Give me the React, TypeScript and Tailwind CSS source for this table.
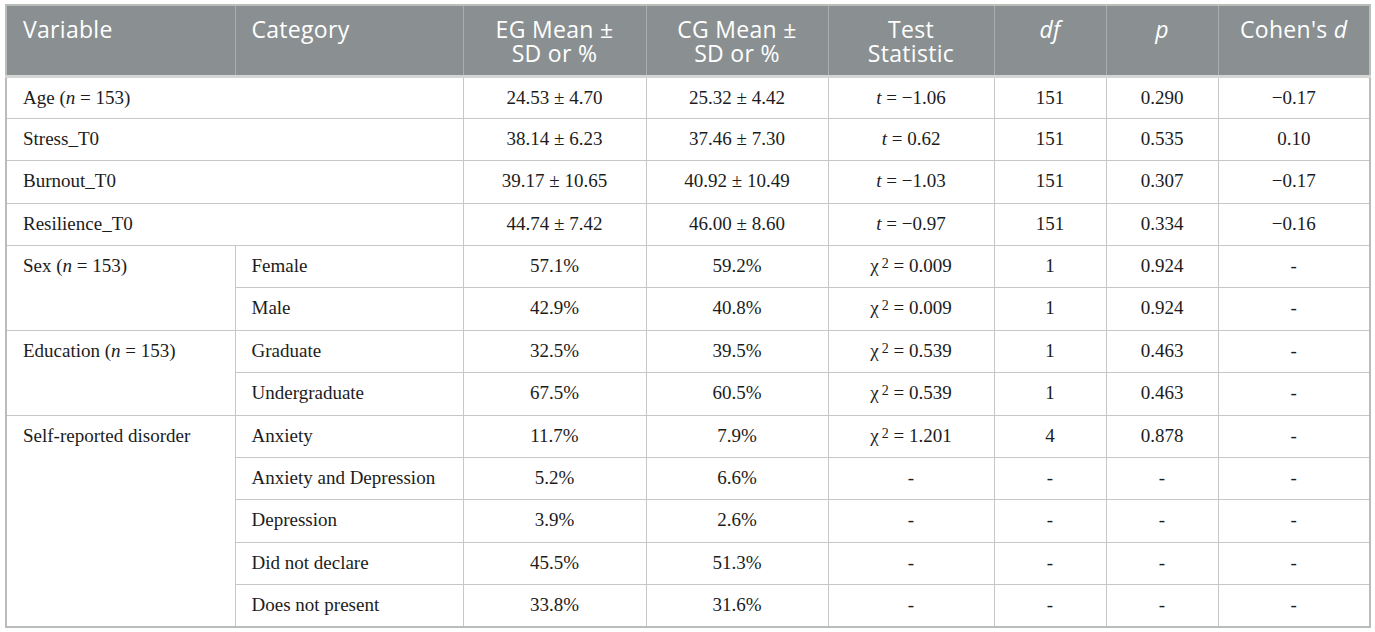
import React from "react";

const serif = { fontFamily: '"Liberation Serif", "Times New Roman", serif' };

type Row = {
  v?: React.ReactNode;
  vSpan?: number;
  vFull?: boolean;
  c?: string;
  eg: string;
  cg: string;
  t: React.ReactNode;
  df: string;
  p: string;
  d: string;
};

const N = () => (
  <>
    (<i>n</i> = 153)
  </>
);
const T = ({ v }: { v: string }) => (
  <>
    <i>t</i> = {v}
  </>
);
const X = ({ v }: { v: string }) => (
  <>
    χ<sup className="text-[14px] relative -top-[4px] ml-[3px]">2</sup> = {v}
  </>
);

const rows: Row[] = [
  { v: <>Age <N /></>, vFull: true, eg: "24.53 ± 4.70", cg: "25.32 ± 4.42", t: <T v="−1.06" />, df: "151", p: "0.290", d: "−0.17" },
  { v: "Stress_T0", vFull: true, eg: "38.14 ± 6.23", cg: "37.46 ± 7.30", t: <T v="0.62" />, df: "151", p: "0.535", d: "0.10" },
  { v: "Burnout_T0", vFull: true, eg: "39.17 ± 10.65", cg: "40.92 ± 10.49", t: <T v="−1.03" />, df: "151", p: "0.307", d: "−0.17" },
  { v: "Resilience_T0", vFull: true, eg: "44.74 ± 7.42", cg: "46.00 ± 8.60", t: <T v="−0.97" />, df: "151", p: "0.334", d: "−0.16" },
  { v: <>Sex <N /></>, vSpan: 2, c: "Female", eg: "57.1%", cg: "59.2%", t: <X v="0.009" />, df: "1", p: "0.924", d: "-" },
  { c: "Male", eg: "42.9%", cg: "40.8%", t: <X v="0.009" />, df: "1", p: "0.924", d: "-" },
  { v: <>Education <N /></>, vSpan: 2, c: "Graduate", eg: "32.5%", cg: "39.5%", t: <X v="0.539" />, df: "1", p: "0.463", d: "-" },
  { c: "Undergraduate", eg: "67.5%", cg: "60.5%", t: <X v="0.539" />, df: "1", p: "0.463", d: "-" },
  { v: "Self-reported disorder", vSpan: 5, c: "Anxiety", eg: "11.7%", cg: "7.9%", t: <X v="1.201" />, df: "4", p: "0.878", d: "-" },
  { c: "Anxiety and Depression", eg: "5.2%", cg: "6.6%", t: "-", df: "-", p: "-", d: "-" },
  { c: "Depression", eg: "3.9%", cg: "2.6%", t: "-", df: "-", p: "-", d: "-" },
  { c: "Did not declare", eg: "45.5%", cg: "51.3%", t: "-", df: "-", p: "-", d: "-" },
  { c: "Does not present", eg: "33.8%", cg: "31.6%", t: "-", df: "-", p: "-", d: "-" },
];

const td = "border border-[#c5c8c6] align-top pt-[9px] pb-0 text-[19px] leading-[22px] text-[#1c1c1c]";
const th =
  "border-x border-[#a9aeae] align-top pt-[11px] px-2 font-normal text-white text-[23px] leading-[24px] tracking-[0.3px]";

export default function App() {
  return (
    <div className="w-[1375px] h-[632px] bg-white pt-[4px] pl-[5px]">
      <table
        className="border-collapse table-fixed w-[1364px] border-2 border-[#b9bdba]"
        style={serif}
      >
        <colgroup>
          <col className="w-[229px]" />
          <col className="w-[228px]" />
          <col className="w-[183px]" />
          <col className="w-[182px]" />
          <col className="w-[166px]" />
          <col className="w-[112px]" />
          <col className="w-[112px]" />
          <col className="w-[152px]" />
        </colgroup>
        <thead>
          <tr
            className="bg-[#8a9091] h-[71px] border-b-[3px] border-[#d3d6d4]"
            style={{ fontFamily: '"Open Sans", "Liberation Sans", sans-serif' }}
          >
            <th className={`${th} text-left pl-[16px] border-l-0`}>Variable</th>
            <th className={`${th} text-left pl-[16px]`}>Category</th>
            <th className={`${th} text-center`}>
              EG Mean ±<br />SD or %
            </th>
            <th className={`${th} text-center`}>
              CG Mean ±<br />SD or %
            </th>
            <th className={`${th} text-center`}>
              Test
              <br />
              Statistic
            </th>
            <th className={`${th} text-center italic`}>df</th>
            <th className={`${th} text-center italic`}>p</th>
            <th className={`${th} text-center border-r-0`}>
              Cohen's <i>d</i>
            </th>
          </tr>
        </thead>
        <tbody>
          {rows.map((r, i) => (
            <tr key={i} className="h-[42.4px]">
              {r.vFull ? (
                <td colSpan={2} className={`${td} pl-[16px] text-left`}>
                  {r.v}
                </td>
              ) : r.v !== undefined ? (
                <>
                  <td rowSpan={r.vSpan} className={`${td} pl-[16px] text-left`}>
                    {r.v}
                  </td>
                  <td className={`${td} pl-[16px] text-left`}>{r.c}</td>
                </>
              ) : (
                <td className={`${td} pl-[16px] text-left`}>{r.c}</td>
              )}
              <td className={`${td} text-center`}>{r.eg}</td>
              <td className={`${td} text-center`}>{r.cg}</td>
              <td className={`${td} text-center`}>{r.t}</td>
              <td className={`${td} text-center`}>{r.df}</td>
              <td className={`${td} text-center`}>{r.p}</td>
              <td className={`${td} text-center`}>{r.d}</td>
            </tr>
          ))}
        </tbody>
      </table>
    </div>
  );
}
